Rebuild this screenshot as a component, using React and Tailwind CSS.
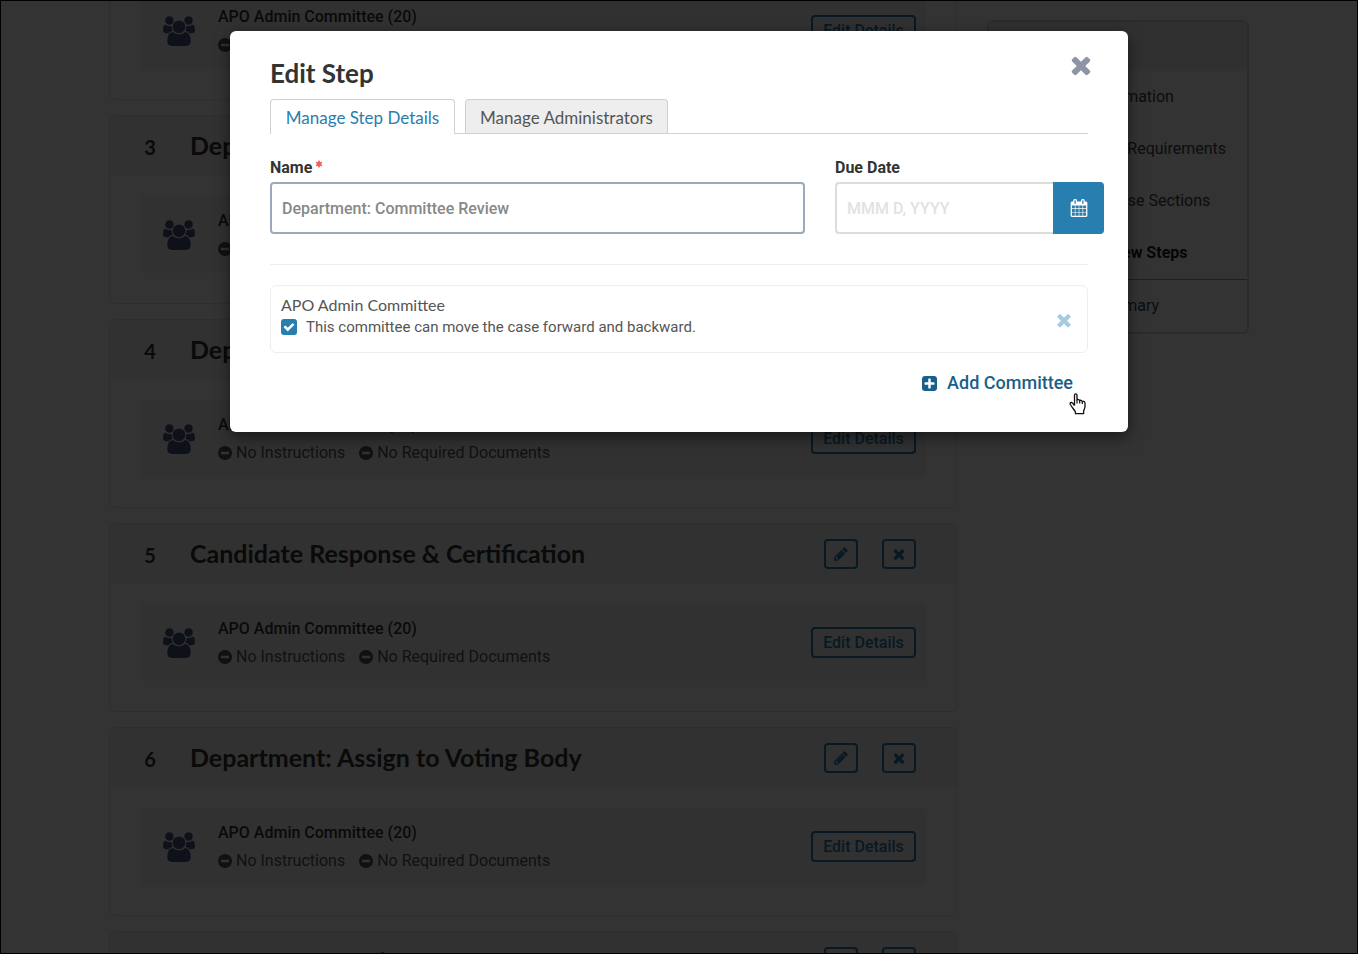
import React from "react";

const PATHS = {
  times:
    "M1490 1322q0 40-28 68l-136 136q-28 28-68 28t-68-28l-294-294-294 294q-28 28-68 28t-68-28l-136-136q-28-28-28-68t28-68l294-294-294-294q-28-28-28-68t28-68l136-136q28-28 68-28t68 28l294 294 294-294q28-28 68-28t68 28l136 136q28 28 28 68t-28 68l-294 294 294 294q28 28 28 68z",
  users:
    "M657 896q-162 5-265 128h-134q-82 0-138-40.5t-56-118.5q0-353 124-353 6 0 43.5 21t97.5 42.5 119 21.5q67 0 133-23-5 37-5 66 0 139 81 256zm1071 637q0 120-73 189.5t-194 69.5h-874q-121 0-194-69.5t-73-189.5q0-53 3.5-103.5t14-109 26.5-108.5 43-97.5 62-81 85.5-53.5 111.5-20q10 0 43 21.5t73 48 107 48 135 21.5 135-21.5 107-48 73-48 43-21.5q61 0 111.5 20t85.5 53.5 62 81 43 97.5 26.5 108.5 14 109 3.5 103.5zm-1024-1277q0 106-75 181t-181 75-181-75-75-181 75-181 181-75 181 75 75 181zm704 384q0 159-112.5 271.5t-271.5 112.5-271.5-112.5-112.5-271.5 112.5-271.5 271.5-112.5 271.5 112.5 112.5 271.5zm576 225q0 78-56 118.5t-138 40.5h-134q-103-123-265-128 81-117 81-256 0-29-5-66 66 23 133 23 59 0 119-21.5t97.5-42.5 43.5-21q124 0 124 353zm-128-609q0 106-75 181t-181 75-181-75-75-181 75-181 181-75 181 75 75 181z",
  pencil:
    "M491 1536l91-91-235-235-91 91v107h128v128h107zm523-928q0-22-22-22-10 0-17 7l-542 542q-7 7-7 17 0 22 22 22 10 0 17-7l542-542q7-7 7-17zm-54-192l416 416-832 832h-416v-416zm683 96q0 53-37 90l-166 166-416-416 166-165q36-38 90-38 53 0 91 38l235 234q37 39 37 91z",
  minusCircle:
    "M1344 960v-128q0-26-19-45t-45-19h-768q-26 0-45 19t-19 45v128q0 26 19 45t45 19h768q26 0 45-19t19-45zm320-64q0 209-103 385.5t-279.5 279.5-385.5 103-385.5-103-279.5-279.5-103-385.5 103-385.5 279.5-279.5 385.5-103 385.5 103 279.5 279.5 103 385.5z",
  calendar:
    "M192 1664h288v-288h-288v288zm352 0h320v-288h-320v288zm-352-352h288v-320h-288v320zm352 0h320v-320h-320v320zm-352-384h288v-288h-288v288zm736 736h320v-288h-320v288zm-384-736h320v-288h-320v288zm768 736h288v-288h-288v288zm-384-352h320v-320h-320v320zm-352-864v-288q0-13-9.5-22.5t-22.5-9.5h-64q-13 0-22.5 9.5t-9.5 22.5v288q0 13 9.5 22.5t22.5 9.5h64q13 0 22.5-9.5t9.5-22.5zm736 864h288v-320h-288v320zm-384-384h320v-288h-320v288zm384 0h288v-288h-288v288zm32-480v-288q0-13-9.5-22.5t-22.5-9.5h-64q-13 0-22.5 9.5t-9.5 22.5v288q0 13 9.5 22.5t22.5 9.5h64q13 0 22.5-9.5t9.5-22.5zm384-64v1280q0 52-38 90t-90 38h-1408q-52 0-90-38t-38-90v-1280q0-52 38-90t90-38h128v-96q0-66 47-113t113-47h64q66 0 113 47t47 113v96h384v-96q0-66 47-113t113-47h64q66 0 113 47t47 113v96h128q52 0 90 38t38 90z",
  plusSquare:
    "M1408 960v-128q0-26-19-45t-45-19h-320v-320q0-26-19-45t-45-19h-128q-26 0-45 19t-19 45v320h-320q-26 0-45 19t-19 45v128q0 26 19 45t45 19h320v320q0 26 19 45t45 19h128q26 0 45-19t19-45v-320h320q26 0 45-19t19-45zm256-544v960q0 119-84.5 203.5t-203.5 84.5h-960q-119 0-203.5-84.5t-84.5-203.5v-960q0-119 84.5-203.5t203.5-84.5h960q119 0 203.5 84.5t84.5 203.5z",
  check:
    "M1671 566q0 40-28 68l-724 724-136 136q-28 28-68 28t-68-28l-136-136-362-362q-28-28-28-68t28-68l136-136q28-28 68-28t68 28l294 295 656-657q28-28 68-28t68 28l136 136q28 28 28 68z",
  asterisk:
    "M1546 1050q46 26 59.5 77.5t-12.5 97.5l-64 110q-26 46-77.5 59.5t-97.5-12.5l-266-153v307q0 52-38 90t-90 38h-128q-52 0-90-38t-38-90v-307l-266 153q-46 26-97.5 12.5t-77.5-59.5l-64-110q-26-46-12.5-97.5t59.5-77.5l266-154-266-154q-46-26-59.5-77.5t12.5-97.5l64-110q26-46 77.5-59.5t97.5 12.5l266 153v-307q0-52 38-90t90-38h128q52 0 90 38t38 90v307l266-153q46-26 97.5-12.5t77.5 59.5l64 110q26 46 12.5 97.5t-59.5 77.5l-266 154z",
};

function Icon({ name, viewBox = "0 0 1792 1792", className = "" }) {
  return (
    <svg viewBox={viewBox} fill="currentColor" aria-hidden="true" className={`shrink-0 ${className}`}>
      <path d={PATHS[name]} />
    </svg>
  );
}

const outline = "flex items-center justify-center rounded border-2 border-[#287eaf] text-[#287eaf]";

function Missing({ children }) {
  return (
    <span className="flex items-center gap-1">
      <Icon name="minusCircle" viewBox="128 128 1536 1536" className="size-3.5" />
      {children}
    </span>
  );
}

function StepCard({ number, title }) {
  return (
    <section className="shrink-0 rounded border border-[#e6e6e6] bg-white pb-[30px]">
      <header className="flex h-[60px] items-center bg-[#f2f2f2] pr-10 pl-5">
        <span className="flex size-10 items-center justify-center rounded-full bg-[#f5f5f5] pt-0.5 font-['Lato',sans-serif] text-xl font-bold">
          {number}
        </span>
        <h2 className="ml-5 flex-1 font-['Lato',sans-serif] text-[25px] font-bold">{title}</h2>
        <div className="flex gap-6">
          <button type="button" aria-label={`Edit ${title}`} className={`${outline} h-[30px] w-[34px]`}>
            <Icon name="pencil" className="size-4" />
          </button>
          <button type="button" aria-label={`Remove ${title}`} className={`${outline} h-[30px] w-[34px]`}>
            <Icon name="times" className="size-4" />
          </button>
        </div>
      </header>
      <div className="mx-[30px] mt-5 flex min-h-[77px] items-center rounded bg-[#f6f6f6] pr-2.5 pl-[22px]">
        <Icon name="users" viewBox="0 0 2048 1792" className="h-[30px] w-[34px] text-[#46557d]" />
        <div className="ml-[22px] flex-1 leading-7">
          <h3 className="font-medium">APO Admin Committee (20)</h3>
          <p className="flex gap-3.5 text-[#555]">
            <Missing>No Instructions</Missing>
            <Missing>No Required Documents</Missing>
          </p>
        </div>
        <button type="button" className={`${outline} h-[31px] w-[105px] font-medium`}>
          Edit Details
        </button>
      </div>
    </section>
  );
}

const STEPS = [
  [2, "Department: Candidate Review"],
  [3, "Department: Initial Review"],
  [4, "Department: Committee Review"],
  [5, "Candidate Response & Certification"],
  [6, "Department: Assign to Voting Body"],
  [7, "Department: Review of Vote"],
];

const NAV = ["Case Information", "Candidate Requirements", "Internal Case Sections", "Case Review Steps"];

function Sidebar() {
  return (
    <nav className="mt-[19px] w-[262px] shrink-0 rounded-md border-2 border-[#d8d8d8] bg-white leading-[52px]">
      <div className="h-[49px] bg-[#f0f0f0]" />
      <ul className="text-[#444]">
        {NAV.map((item) => (
          <li key={item}>
            <a
              href="#"
              className={
                item === "Case Review Steps" ? "block pl-[62px] font-bold text-[#222]" : "block pl-[62px]"
              }
            >
              {item}
            </a>
          </li>
        ))}
        <li className="border-t border-[#999]">
          <a href="#" className="block pl-[62px]">
            Case Summary
          </a>
        </li>
      </ul>
    </nav>
  );
}

function HandCursor() {
  return (
    <svg
      viewBox="0 0 17 22"
      aria-hidden="true"
      className="absolute -bottom-5 -left-1 h-[22px] w-[17px]"
    >
      <path
        d="M5.500 12.500V2.200C5.500 .3 8 .3 8 2.200V7.200C8.300 6.100 10.600 6.300 10.700 7.800C11 6.900 13.200 7.100 13.300 8.700C13.800 8 16 8.300 16 10.200V13.500C16 15.500 14.700 16.800 14.600 18.500V20.700H6.400V18.800C5.200 16.500 3 14.500 1.300 11.500C.5 9.800 2.400 8.800 3.600 10.200L5.500 12.500"
        fill="#fff"
        stroke="#111"
        strokeWidth="1.3"
        strokeLinejoin="round"
      />
      <path d="M8 7.200V10.500M10.700 7.800V10.500M13.300 8.700V11" stroke="#111" strokeWidth="1.200" fill="none" />
    </svg>
  );
}

function EditStepDialog() {
  return (
    <div
      role="dialog"
      aria-modal="true"
      aria-labelledby="dialog-title"
      className="w-full max-w-[898px] rounded-md bg-white px-10 pt-7 pb-[37px] shadow-[0_5px_15px_rgba(0,0,0,0.5)]"
    >
      <div className="flex h-10 items-start justify-between">
        <h1 id="dialog-title" className="font-['Lato',sans-serif] text-[26px] leading-7 font-bold text-[#333]">
          Edit Step
        </h1>
        <button type="button" aria-label="Close" className="-mt-2 -mr-[7px] text-[#8c94a6]">
          <Icon name="times" className="size-7" />
        </button>
      </div>

      <div role="tablist" className="flex gap-2.5 border-b border-[#d0d0d0] font-['Lato',sans-serif] text-[17px]">
        <button
          type="button"
          role="tab"
          aria-selected="true"
          className="-mb-px h-[35px] w-[185px] rounded-t border border-b-0 border-[#d0d0d0] bg-white pt-0.5 text-[#287eaf]"
        >
          Manage Step Details
        </button>
        <button
          type="button"
          role="tab"
          aria-selected="false"
          className="h-[34px] w-[203px] rounded-t border border-b-0 border-[#d0d0d0] bg-[#eee] pt-0.5 text-[#555]"
        >
          Manage Administrators
        </button>
      </div>

      <form onSubmit={(e) => e.preventDefault()}>
        <div className="-mr-4 flex gap-[30px] pt-[22px]">
          <div className="min-w-0 flex-1">
            <label htmlFor="step-name" className="flex pb-0.5 leading-6 font-bold text-[#333]">
              Name
              <Icon name="asterisk" className="mt-1 ml-[3px] size-2 text-[#f05a5a]" />
            </label>
            <input
              id="step-name"
              type="text"
              defaultValue="Department: Committee Review"
              className="h-[52px] w-full rounded border-2 border-[#9ba9ba] px-2.5 font-medium text-[#888] outline-none"
            />
          </div>
          <div className="w-[269px]">
            <label htmlFor="due-date" className="block pb-0.5 leading-6 font-bold text-[#333]">
              Due Date
            </label>
            <div className="flex">
              <input
                id="due-date"
                type="text"
                placeholder="MMM D, YYYY"
                className="h-[52px] w-full min-w-0 flex-1 rounded-l border-2 border-r-0 border-[#dcdcdc] px-2.5 font-medium outline-none placeholder:text-[#e2e2e2]"
              />
              <button
                type="button"
                aria-label="Choose date"
                className="flex w-[51px] items-center justify-center rounded-r bg-[#287eaf] text-white"
              >
                <Icon name="calendar" className="h-[18px] w-[18px]" />
              </button>
            </div>
          </div>
        </div>

        <hr className="mt-[30px] mb-5 border-[#eee]" />

        <div className="flex h-[68px] items-center justify-between rounded-md border border-[#eee] pr-[13px] pl-2.5 text-[#555]">
          <div className="-mt-1.5">
            <p className="font-['Lato',sans-serif] leading-[22px]">APO Admin Committee</p>
            <label className="flex items-center gap-[9px] text-[15px] leading-[22px]">
              <span className="grid size-4">
                <input
                  type="checkbox"
                  defaultChecked
                  className="col-start-1 row-start-1 size-4 appearance-none rounded-[3px] bg-[#287eaf]"
                />
                <Icon
                  name="check"
                  className="pointer-events-none col-start-1 row-start-1 size-3 place-self-center text-white"
                />
              </span>
              This committee can move the case forward and backward.
            </label>
          </div>
          <button type="button" aria-label="Remove APO Admin Committee" className="pt-0.5 text-[#a6cae0]">
            <Icon name="times" className="size-5" />
          </button>
        </div>

        <div className="mt-[18px] flex justify-end">
          <button
            type="button"
            className="flex items-center gap-2.5 text-lg leading-6 font-medium text-[#1a5f8a]"
          >
            <Icon name="plusSquare" viewBox="128 128 1536 1536" className="size-[15px]" />
            Add Committee
          </button>
          <span className="relative w-[15px]">
            <HandCursor />
          </span>
        </div>
      </form>
    </div>
  );
}

export default function App() {
  return (
    <div className="relative h-screen overflow-hidden border border-black bg-white font-['Roboto',sans-serif] text-base text-[#333]">
      <div className="mx-auto flex max-w-[1140px] items-start gap-[30px]">
        <main className="-mt-[90px] flex min-w-0 flex-1 flex-col gap-[15px]">
          {STEPS.map(([number, title]) => (
            <StepCard key={number} number={number} title={title} />
          ))}
        </main>
        <Sidebar />
      </div>
      <div className="absolute inset-0 flex items-start justify-center bg-black/80 pt-[30px]">
        <EditStepDialog />
      </div>
    </div>
  );
}
